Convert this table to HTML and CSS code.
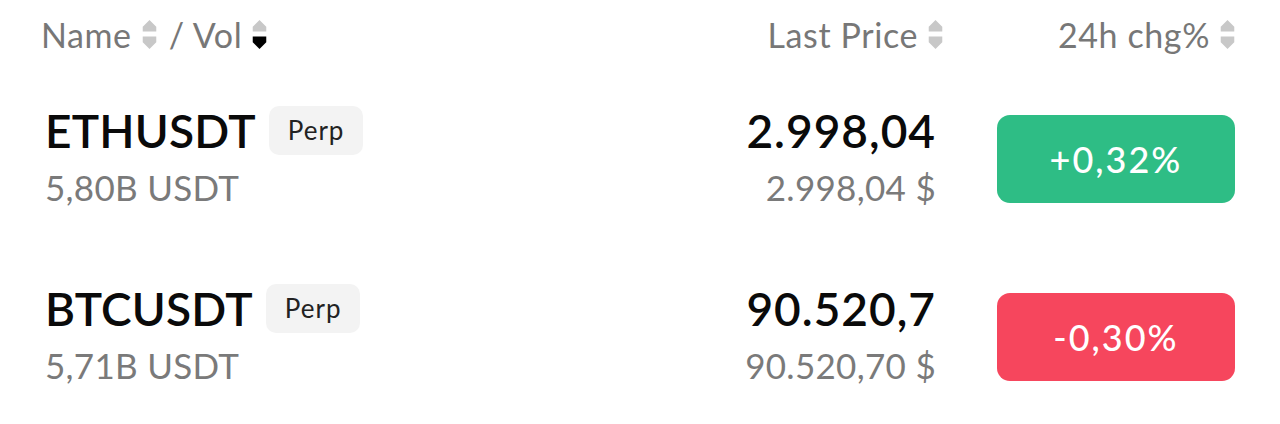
FILE: index.html
```html
<!DOCTYPE html>
<html>
<head>
<meta charset="utf-8">
<link rel="stylesheet" href="styles.css">
</head>
<body>
<div class="table">
  <div class="head">
    <div class="hcell name-h">
      <span>Name</span>
      <svg class="sort" viewBox="0 0 14 30"><path d="M7 0 L14 7 V12 H0 V7 Z" fill="#c8c8c8"/><path d="M0 17 H14 V23 L7 30 L0 23 Z" fill="#c8c8c8"/></svg>
      <span class="slash">/ Vol</span>
      <svg class="sort" viewBox="0 0 14 30"><path d="M7 0 L14 7 V12 H0 V7 Z" fill="#c8c8c8"/><path d="M0 17 H14 V23 L7 30 L0 23 Z" fill="#000"/></svg>
    </div>
    <div class="hcell price-h">
      <span>Last Price</span>
      <svg class="sort" viewBox="0 0 14 30"><path d="M7 0 L14 7 V12 H0 V7 Z" fill="#c8c8c8"/><path d="M0 17 H14 V23 L7 30 L0 23 Z" fill="#c8c8c8"/></svg>
    </div>
    <div class="hcell chg-h">
      <span>24h chg%</span>
      <svg class="sort" viewBox="0 0 14 30"><path d="M7 0 L14 7 V12 H0 V7 Z" fill="#c8c8c8"/><path d="M0 17 H14 V23 L7 30 L0 23 Z" fill="#c8c8c8"/></svg>
    </div>
  </div>

  <div class="row">
    <div class="namecol">
      <div class="sym"><span class="ticker">ETHUSDT</span><span class="tag">Perp</span></div>
      <div class="sub">5,80B USDT</div>
    </div>
    <div class="pricecol">
      <div class="price">2.998,04</div>
      <div class="sub">2.998,04 $</div>
    </div>
    <div class="chgcol"><div class="chg up">+0,32%</div></div>
  </div>

  <div class="row">
    <div class="namecol">
      <div class="sym"><span class="ticker">BTCUSDT</span><span class="tag">Perp</span></div>
      <div class="sub">5,71B USDT</div>
    </div>
    <div class="pricecol">
      <div class="price">90.520,7</div>
      <div class="sub">90.520,70 $</div>
    </div>
    <div class="chgcol"><div class="chg down">-0,30%</div></div>
  </div>
</div>
</body>
</html>
```
FILE: styles.css
```css
html, body {
  margin: 0;
  padding: 0;
  background: #fff;
}
body {
  font-family: "Lato", "Noto Sans", sans-serif;
  color: #0a0a0a;
}
.table {
  padding: 11px 45px 0 41px;
}
.head, .row {
  display: grid;
  grid-template-columns: 1fr 300px 238px;
  column-gap: 61px;
  align-items: center;
}
.head {
  height: 46px;
  margin-bottom: 13px;
}
.hcell {
  display: flex;
  align-items: center;
  font-size: 34px;
  letter-spacing: 0.6px;
  color: #777;
}
.price-h, .chg-h {
  justify-content: flex-end;
}
.price-h {
  margin-right: -7px;
}
.sort {
  width: 15px;
  height: 29px;
  margin-left: 10px;
}
.slash {
  margin-left: 12px;
}
.row {
  height: 178px;
}
.namecol, .pricecol {
  padding-bottom: 7px;
}
.sym {
  display: flex;
  align-items: center;
}
.ticker {
  font-size: 46px;
  font-weight: 600;
  letter-spacing: 0.2px;
  margin-left: 4px;
}
.tag {
  margin-left: 13px;
  background: #f3f3f3;
  border-radius: 10px;
  font-size: 26px;
  letter-spacing: 1px;
  color: #222;
  padding: 8px 19px 9px;
}
.sub {
  font-size: 35px;
  letter-spacing: 0.3px;
  color: #7a7a7a;
  margin-top: 8px;
  margin-left: 4px;
}
.pricecol {
  text-align: right;
}
.price {
  font-size: 46px;
  font-weight: 600;
  letter-spacing: 1px;
}
.chg {
  height: 88px;
  border-radius: 13px;
  color: #fff;
  font-size: 36px;
  font-weight: 500;
  letter-spacing: 2px;
  display: flex;
  align-items: center;
  justify-content: center;
}
.up { background: #2ebd85; }
.down { background: #f6465d; }
```
